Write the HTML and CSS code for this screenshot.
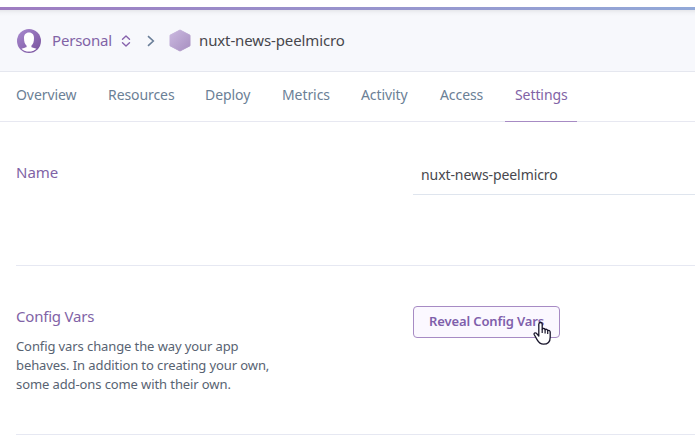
FILE: index.html
```
<!DOCTYPE html>
<html lang="en">
<head>
<meta charset="utf-8">
<title>nuxt-news-peelmicro · Settings</title>
<link rel="stylesheet" href="styles.css">
</head>
<body>
<div class="topbar"></div>
<header class="header">
  <svg class="avatar" width="24" height="24" viewBox="0 0 24 24">
    <defs>
      <linearGradient id="av" x1="0" y1="0" x2="1" y2="1"><stop offset="0" stop-color="#a98bd0"/><stop offset="1" stop-color="#77509b"/></linearGradient>
      <clipPath id="disc"><circle cx="12" cy="12" r="10.8"/></clipPath>
    </defs>
    <circle cx="12" cy="12" r="12" fill="url(#av)"/>
    <path clip-path="url(#disc)" fill="#fff" d="M12 3.600c-3.300 0-5 2.300-5 5.500 0 3.600.8 6.300 2.600 7.600v1c0 1.100-3 1-5.200 2C6.200 21.900 8.800 22.800 12 22.800s5.800-1 7.600-3.100c-2.200-1-5.200-.9-5.200-2v-1C16.200 15.400 17 12.700 17 9.100c0-3.200-1.700-5.500-5-5.500z"/>
  </svg>
  <span class="owner">Personal</span>
  <svg class="sort" width="10" height="12" viewBox="0 0 10 12" fill="none" stroke="#8661ac" stroke-width="1.400" stroke-linejoin="round" stroke-linecap="round"><path d="M1.500 4.200 5 1l3.500 3.200M1.500 7.800 5 11l3.500-3.200"/></svg>
  <svg class="chevron" width="8" height="12" viewBox="0 0 8 12" fill="none" stroke="#6a7f99" stroke-width="1.600"><path d="M1 1.200 6.300 6 1 10.800"/></svg>
  <svg class="hex" width="22" height="23" viewBox="0 0 22 23">
    <defs><linearGradient id="hx" x1="0" y1="0" x2="1" y2="1"><stop offset="0" stop-color="#cbb9e0"/><stop offset="1" stop-color="#a78fc0"/></linearGradient></defs>
    <path fill="url(#hx)" stroke="url(#hx)" stroke-linejoin="round" d="M11 1 21 6.200v10.600L11 22 1 16.800V6.200z"/>
  </svg>
  <span class="app">nuxt-news-peelmicro</span>
</header>
<nav class="tabs">
  <a class="tab">Overview</a>
  <a class="tab">Resources</a>
  <a class="tab">Deploy</a>
  <a class="tab">Metrics</a>
  <a class="tab">Activity</a>
  <a class="tab">Access</a>
  <a class="tab active">Settings</a>
</nav>
<main class="main">
  <section class="row name-row">
    <h2 class="title name-title">Name</h2>
    <div class="field">nuxt-news-peelmicro</div>
  </section>
  <section class="row config-row">
    <div>
      <h2 class="title config-title">Config Vars</h2>
      <p class="desc">Config vars change the way your app<br>behaves. In addition to creating your own,<br>some add-ons come with their own.</p>
    </div>
    <button class="reveal">Reveal Config Vars
      <svg class="cursor" width="19" height="25" viewBox="0 0 19 25"><path d="M5.800 15V3.200a1.700 1.700 0 0 1 3.400 0v4.900c.5-1 2.600-.8 2.900.6.7-.8 2.400-.4 2.600.9.9-.6 2.500-.1 2.500 1.600v5c0 4.300-2.600 7-6.800 7-3.500 0-4.700-1.700-6.200-4.300L1.300 13.800c-.8-1.500.8-2.600 2.200-1.500z" fill="#fff" stroke="#18152b" stroke-width="1.300" stroke-linejoin="round"/><path d="M9.200 8v4M12.100 8.700V12.500M14.700 9.600V13" stroke="#18152b" stroke-width="1.200" fill="none"/></svg>
    </button>
  </section>
</main>
</body>
</html>
```
FILE: styles.css
```
* { box-sizing: border-box; }
body {
  margin: 0;
  padding-top: 7px;
  background: #fff;
  font-family: "Noto Sans", sans-serif;
  color: #596981;
  overflow: hidden;
  height: 439px;
}
.topbar {
  height: 3px;
  background: linear-gradient(90deg, #9e7cc1, #92a9d8);
}
.header {
  display: flex;
  align-items: center;
  height: 62px;
  padding-left: 17px;
  background: linear-gradient(#e6e7eb, #f2f3f7 3px, #f7f8fc 6px);
  border-bottom: 1px solid #e5e7ef;
  font-size: 15px;
  white-space: nowrap;
}
.owner { width: 69px; margin: -2px 0 0 11px; letter-spacing: -0.2px; color: #8163a6; }
.sort { margin-right: 16px; }
.chevron { margin-right: 14px; }
.hex { margin-right: 8px; }
.app { margin-top: -2px; letter-spacing: -0.12px; color: #47474d; }
.tabs {
  display: grid;
  grid-template-columns: 92px 97px 77px 79px 79px 75px 72px;
  height: 50px;
  padding-left: 6px;
  border-bottom: 1px solid #e7e8f1;
  font-size: 14px;
  line-height: 46px;
  letter-spacing: -0.08px;
  white-space: nowrap;
}
.tab { height: 50px; padding-left: 10px; color: #6b8096; }
.active { color: #8163a6; border-bottom: 1px solid #a78bc4; }
.main { padding-left: 16px; }
.row {
  display: grid;
  grid-template-columns: 397px 1fr;
  align-items: start;
  border-bottom: 1px solid #e6e8f2;
}
.name-row { height: 144px; padding-top: 34px; }
.config-row { height: 169px; padding-top: 39px; }
.title { margin: 0; font-size: 15px; font-weight: 400; line-height: 22px; color: #8163a6; }
.name-title { margin-top: 5px; }
.config-title { letter-spacing: -0.2px; }
.field {
  height: 39px;
  padding-left: 8px;
  border-bottom: 1px solid #dfe5ee;
  font-size: 14px;
  line-height: 38px;
  letter-spacing: -0.08px;
  color: #47474d;
}
.desc {
  margin: 10px 0 0;
  font-size: 13px;
  line-height: 19px;
  letter-spacing: -0.1px;
  white-space: nowrap;
  color: #586372;
}
.reveal {
  position: relative;
  width: 147px;
  height: 32px;
  margin-top: 1px;
  padding: 0 0 2px 15px;
  border: 1px solid #a78bc4;
  border-radius: 4px;
  background: #fbf8ff;
  font: 600 13px/28px "Noto Sans", sans-serif;
  letter-spacing: -0.12px;
  color: #7f5fab;
  text-align: left;
  white-space: nowrap;
}
.cursor { position: absolute; left: 119px; top: 14px; }
```
